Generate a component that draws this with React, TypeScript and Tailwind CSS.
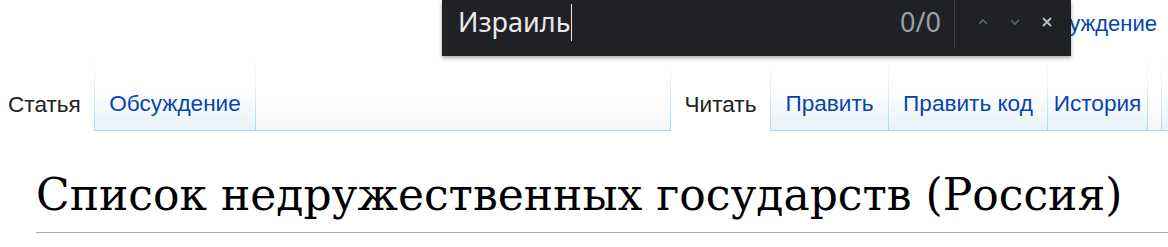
import React from 'react';

const sans = { fontFamily: '"Liberation Sans", Arial, sans-serif' };

const Sep: React.FC = () => (
  <div className="w-px self-stretch bg-linear-to-b from-[#a7d7f9]/0 to-[#a7d7f9]" />
);

const Tab: React.FC<{ label: string; w: string; selected?: boolean }> = ({ label, w, selected }) => (
  <div
    className={`${w} flex items-end justify-center pb-[13px] ${
      selected
        ? 'bg-white text-[#202122]'
        : 'bg-linear-to-b from-white from-40% to-[#e8f2f8] border-b border-[#a7d7f9] text-[#0645ad]'
    }`}
  >
    <span className="text-[22.6px] leading-[26px]">{label}</span>
  </div>
);

const FindBar: React.FC = () => (
  <div
    className="absolute left-[442px] top-0 w-[629px] h-[56px] bg-[#202124] shadow-[0_2px_4px_rgba(0,0,0,0.35)] flex items-center"
    style={{ fontFamily: '"Noto Sans", "Open Sans", sans-serif' }}
  >
    <div className="flex-1 flex items-center pl-[16px] -mt-[12px]">
      <span className="text-[27px] leading-[36px] text-[#e8eaed]">Израиль</span>
      <span className="w-px h-[37px] bg-[#e8eaed] ml-[1px]" />
    </div>
    <span className="text-[27px] leading-[36px] text-[#9aa0a6] -mt-[12px] mr-[13px]">0/0</span>
    <div className="w-px h-[48px] self-start bg-[#3c4043]" />
    <div className="flex items-center gap-[14px] pl-[19px] pr-[15px] -mt-[12px]">
      <svg width="18" height="18" viewBox="0 0 18 18" fill="none" stroke="#5f6368" strokeWidth="1.6">
        <path d="M5 11 L9 7 L13 11" />
      </svg>
      <svg width="18" height="18" viewBox="0 0 18 18" fill="none" stroke="#5f6368" strokeWidth="1.6">
        <path d="M5 7 L9 11 L13 7" />
      </svg>
      <svg width="18" height="18" viewBox="0 0 18 18" fill="none" stroke="#bdc1c6" strokeWidth="1.8">
        <path d="M5 5 L13 13 M13 5 L5 13" />
      </svg>
    </div>
  </div>
);

export default function App() {
  return (
    <div className="relative w-[1168px] h-[247px] bg-white overflow-hidden" style={sans}>
      <div className="h-[62px] flex justify-end items-start pr-[11px] pt-[11px]">
        <span className="text-[22px] leading-[25px] text-[#0645ad]">Обсуждение</span>
      </div>

      <div className="flex h-[69px]">
        <Tab label="Статья" w="w-[94px] !justify-start pl-[8px]" selected />
        <Sep />
        <Tab label="Обсуждение" w="w-[160px]" />
        <Sep />
        <div className="flex-1 bg-linear-to-b from-white from-50% to-[#f6f6f6] border-b border-[#a7d7f9]" />
        <Sep />
        <Tab label="Читать" w="w-[99px]" selected />
        <Sep />
        <Tab label="Править" w="w-[117px]" />
        <Sep />
        <Tab label="Править код" w="w-[158px]" />
        <Sep />
        <Tab label="История" w="w-[99px]" />
        <Sep />
        <div className="w-[13px] bg-linear-to-b from-white from-50% to-[#f6f6f6] border-b border-[#a7d7f9]" />
        <Sep />
        <div className="w-[6px] bg-linear-to-b from-white from-40% to-[#e8f2f8] border-b border-[#a7d7f9]" />
      </div>

      <div className="ml-[36px] mt-[39px] border-b border-[#a2a9b1] pb-[13px]">
        <h1
          className="text-[44px] leading-[49px] text-black whitespace-nowrap"
          style={{ fontFamily: '"DejaVu Serif", Georgia, serif' }}
        >
          Список недружественных государств (Россия)
        </h1>
      </div>

      <FindBar />
    </div>
  );
}
